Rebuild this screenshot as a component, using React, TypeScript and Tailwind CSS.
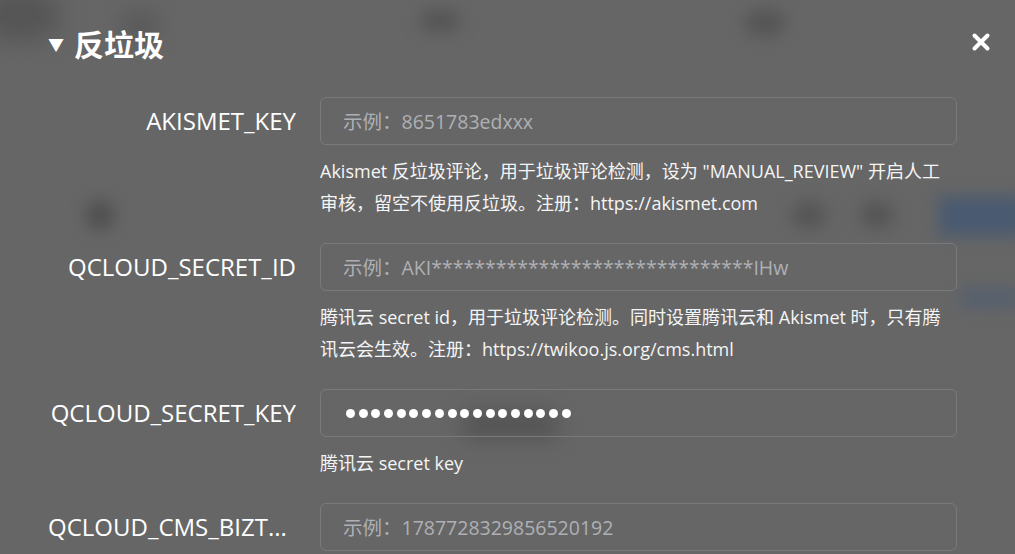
import React from "react";

const fields = [
  {
    label: "AKISMET_KEY",
    placeholder: "示例：8651783edxxx",
    help: 'Akismet 反垃圾评论，用于垃圾评论检测，设为 "MANUAL_REVIEW" 开启人工审核，留空不使用反垃圾。注册：https://akismet.com',
  },
  {
    label: "QCLOUD_SECRET_ID",
    placeholder: "示例：AKI******************************IHw",
    help: "腾讯云 secret id，用于垃圾评论检测。同时设置腾讯云和 Akismet 时，只有腾讯云会生效。注册：https://twikoo.js.org/cms.html",
  },
  {
    label: "QCLOUD_SECRET_KEY",
    password: 18,
    help: "腾讯云 secret key",
  },
  {
    label: "QCLOUD_CMS_BIZT...",
    placeholder: "示例：1787728329856520192",
    short: true,
  },
];

const CloseIcon = () => (
  <svg width="20" height="20" viewBox="0 0 20 20" fill="none" stroke="#fff" strokeWidth="4" strokeLinecap="round">
    <path d="M3.5 3.5L16.5 16.5M16.5 3.5L3.5 16.5" />
  </svg>
);

const App = () => {
  return (
    <div
      className="relative h-[554px] w-[1015px] overflow-hidden bg-[#666666] text-white"
      style={{ fontFamily: '"Open Sans", "Noto Sans CJK SC", sans-serif' }}
    >
      {/* blurred page behind the overlay */}
      <div className="pointer-events-none absolute inset-0">
        <div className="absolute left-[-20px] top-[-10px] h-[50px] w-[80px] rounded-full bg-[#555] blur-[12px]" />
        <div className="absolute left-[120px] top-[10px] h-[30px] w-[40px] rounded-full bg-[#5a5a5a] blur-[10px]" />
        <div className="absolute left-[420px] top-[10px] h-[22px] w-[40px] rounded-full bg-[#555] blur-[8px]" />
        <div className="absolute left-[745px] top-[10px] h-[26px] w-[40px] rounded-full bg-[#555] blur-[8px]" />
        <div className="absolute left-[85px] top-[200px] h-[30px] w-[30px] rounded-full bg-[#505050] blur-[8px]" />
        <div className="absolute left-[792px] top-[202px] h-[26px] w-[34px] rounded-full bg-[#555] blur-[8px]" />
        <div className="absolute left-[860px] top-[202px] h-[26px] w-[34px] rounded-full bg-[#555] blur-[8px]" />
        <div className="absolute left-[938px] top-[196px] h-[40px] w-[90px] rounded-md bg-[#4a5a70] blur-[8px]" />
        <div className="absolute left-[960px] top-[288px] h-[20px] w-[60px] rounded-md bg-[#55606e] blur-[8px]" />
        <div className="absolute left-[460px] top-[410px] h-[30px] w-[100px] rounded-full bg-[#555] blur-[10px]" />
      </div>

      <div className="relative flex flex-col px-12 pt-[26px]">
        <div className="flex h-[38px] items-center justify-between">
          <div className="flex items-center gap-[10px]">
            <span className="text-[16px] leading-none">▼</span>
            <span className="text-[30px] font-bold leading-none">反垃圾</span>
          </div>
          <div className="mr-[-24px] mt-[-7px]">
            <CloseIcon />
          </div>
        </div>

        <div className="mt-[33px] flex flex-col">
          {fields.map((f) => (
            <div key={f.label} className="mb-[24px] flex gap-6">
              <div
                className={`flex h-12 w-[248px] shrink-0 items-center text-[24px] ${
                  f.short ? "justify-start" : "justify-end"
                }`}
              >
                <span className="whitespace-nowrap">{f.label}</span>
              </div>
              <div className="flex w-[637px] flex-col">
                {f.password ? (
                  <div className="flex h-12 w-full items-center gap-[3.7px] rounded-md border border-[#7a7a7a] px-[25px]">
                    {Array.from({ length: f.password }).map((_, i) => (
                      <span key={i} className="h-[9px] w-[9px] rounded-full bg-white" />
                    ))}
                  </div>
                ) : (
                  <input
                    type="text"
                    readOnly
                    placeholder={f.placeholder}
                    className="h-12 w-full rounded-md border border-[#7a7a7a] bg-transparent px-[22px] text-[19.5px] text-white outline-none placeholder:text-[#aeb0b5]"
                  />
                )}
                {f.help && (
                  <p className="mt-[10px] text-[18px] leading-[32px] text-[#f5f5f5]">{f.help}</p>
                )}
              </div>
            </div>
          ))}
        </div>
      </div>
    </div>
  );
};

export default App;
